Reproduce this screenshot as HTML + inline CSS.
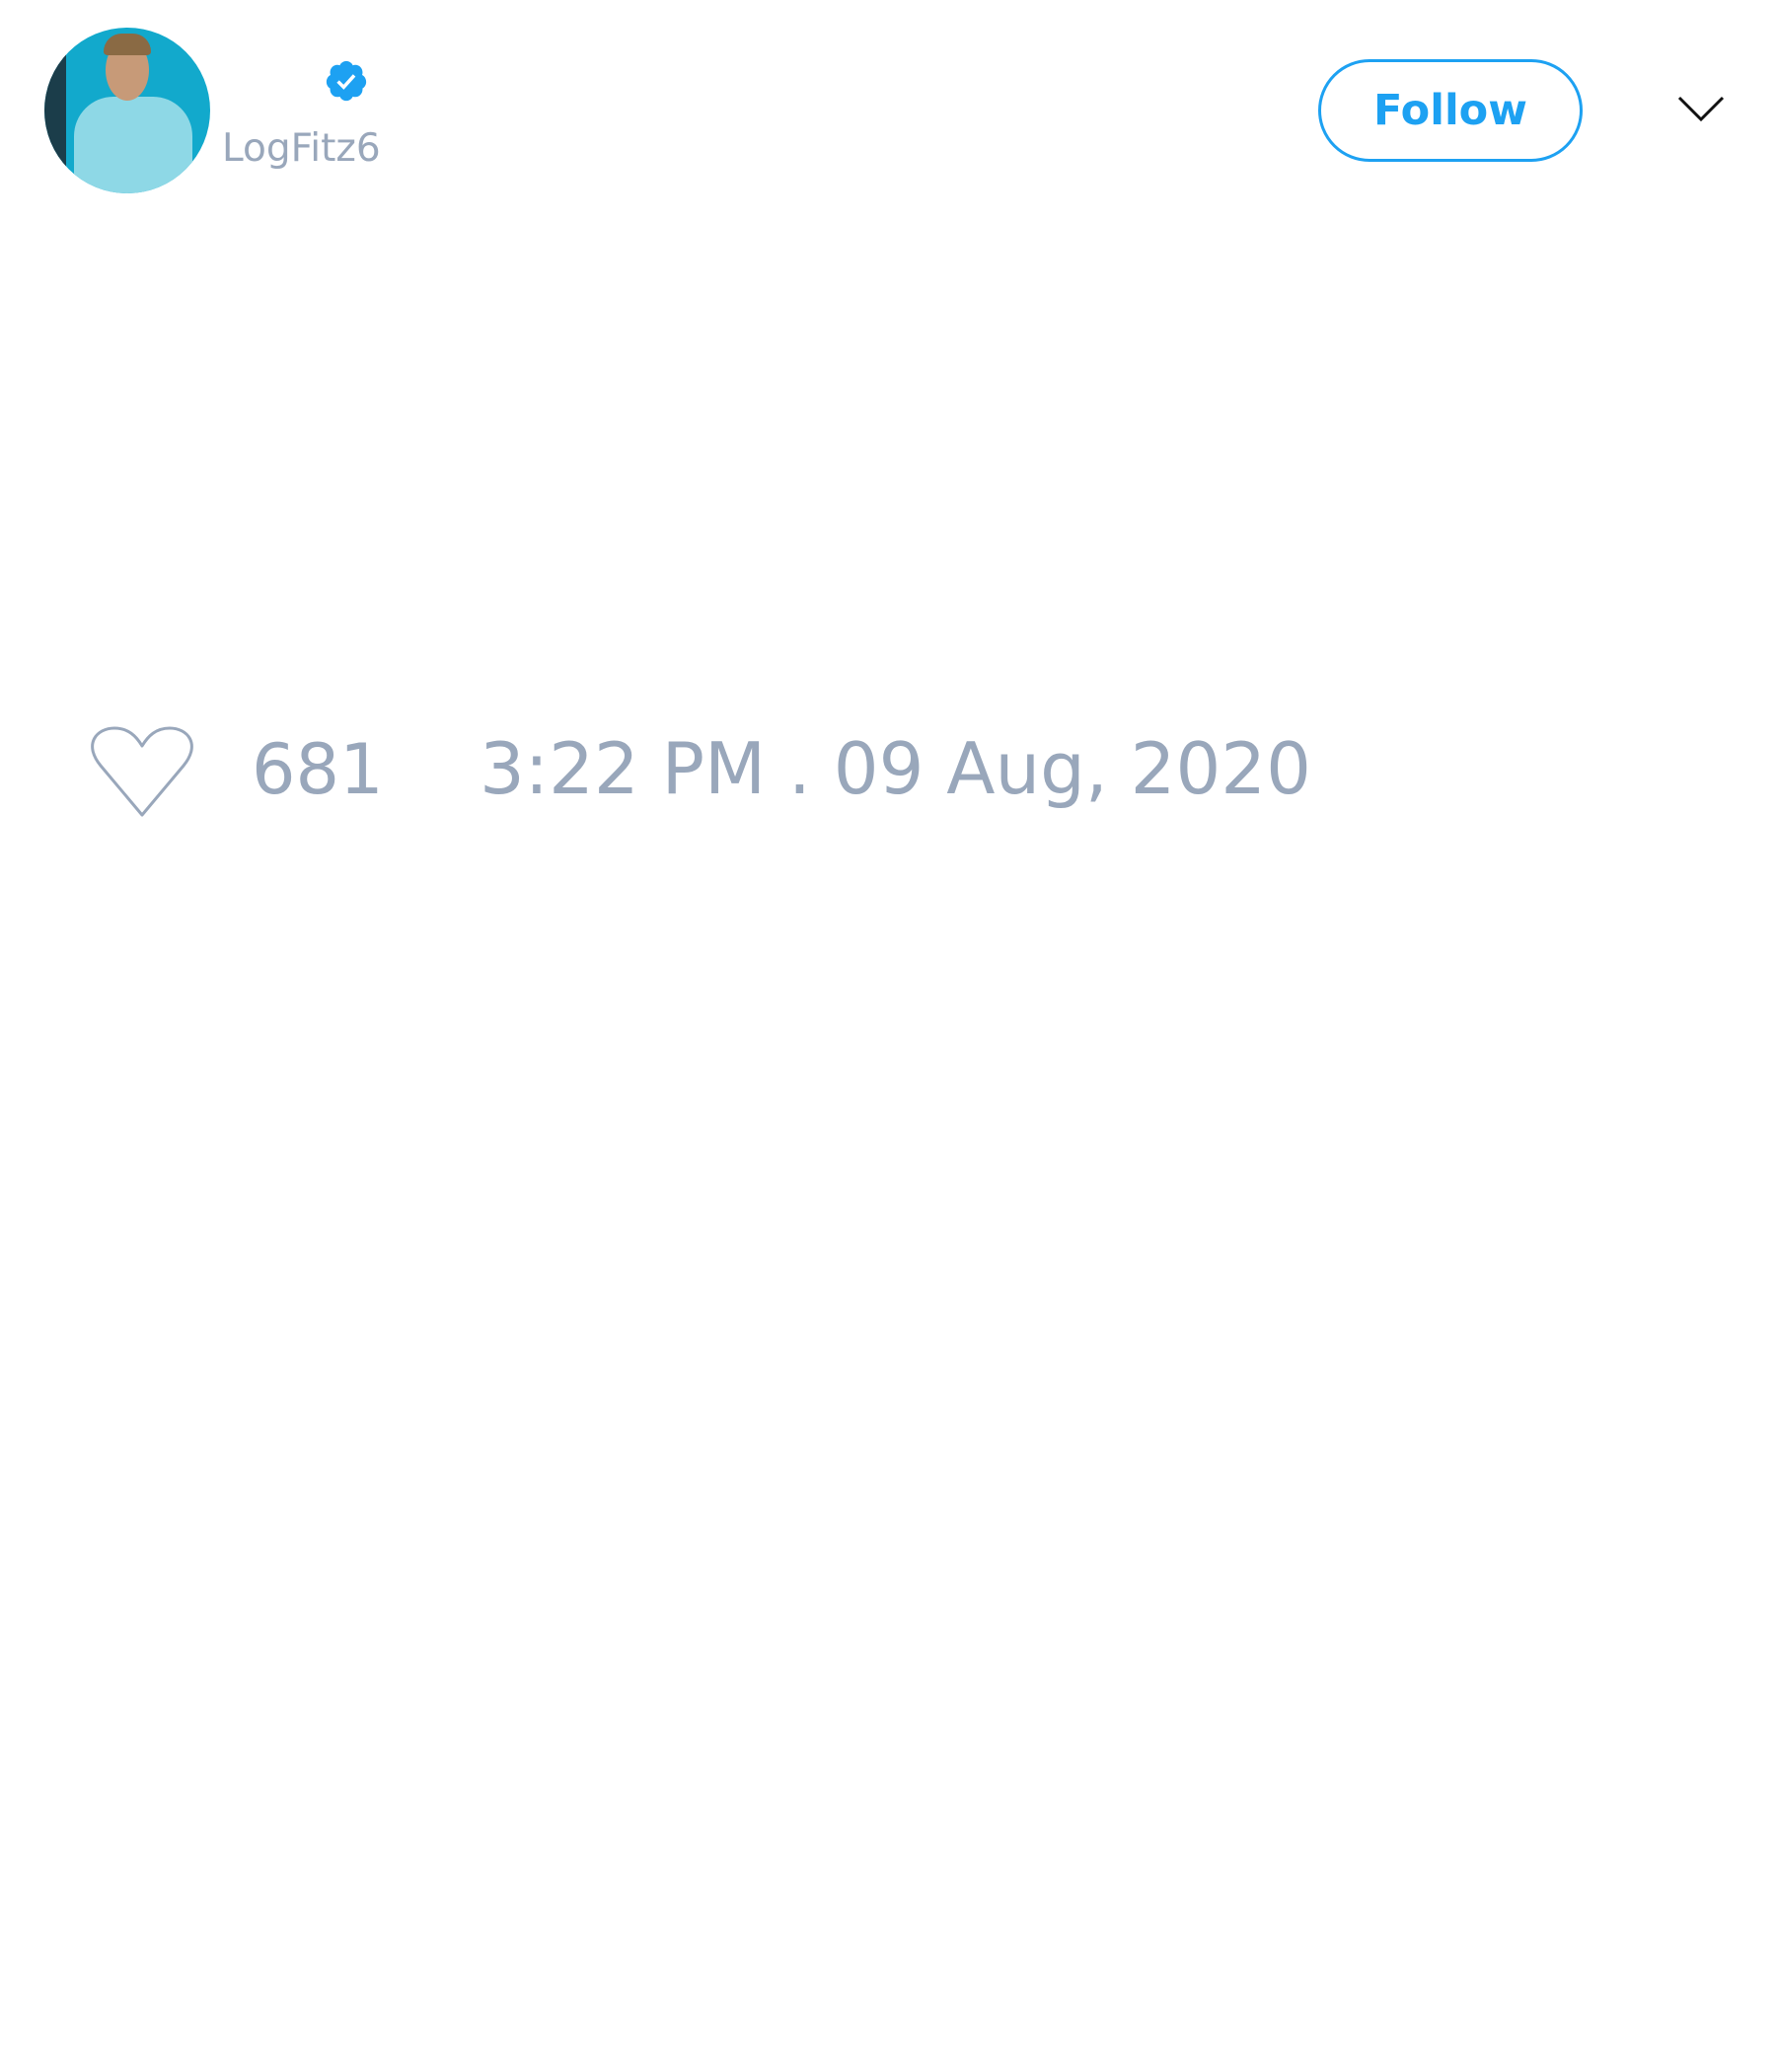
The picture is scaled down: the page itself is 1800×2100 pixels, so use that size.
<!DOCTYPE html>
<html><head><meta charset="utf-8"><style>
body{margin:0;width:1800px;height:2100px;background:#fff;position:relative;font-family:"DejaVu Sans","Liberation Sans",sans-serif;overflow:hidden}
.a{position:absolute}
</style></head><body>
<div class="a" style="left:45px;top:28px;width:168px;height:168px;border-radius:50%;overflow:hidden;background:#12a9cc">
 <div class="a" style="left:0;top:0;width:22px;height:168px;background:#1b3d4a"></div>
 <div class="a" style="left:30px;top:70px;width:120px;height:110px;border-radius:40px 40px 0 0;background:#8ed8e6"></div>
 <div class="a" style="left:62px;top:12px;width:44px;height:62px;border-radius:50%;background:#c79a78"></div>
 <div class="a" style="left:60px;top:6px;width:48px;height:22px;border-radius:20px 20px 4px 4px;background:#8a6a44"></div>
</div>
<svg class="a" style="left:328px;top:59px" width="46" height="46" viewBox="0 0 24 24"><path fill="#1da1f2" d="M22.5 12.5c0-1.58-.875-2.95-2.148-3.6.154-.435.238-.905.238-1.4 0-2.21-1.71-3.998-3.818-3.998-.47 0-.92.084-1.336.25C14.818 2.415 13.51 1.5 12 1.5s-2.816.917-3.437 2.250c-.415-.165-.866-.25-1.336-.25-2.110 0-3.818 1.79-3.818 4 0 .494.083.964.237 1.4-1.272.65-2.147 2.018-2.147 3.6 0 1.495.782 2.798 1.942 3.486-.02.17-.032.34-.032.514 0 2.21 1.708 4 3.818 4 .47 0 .92-.086 1.335-.25.62 1.334 1.926 2.25 3.437 2.25 1.512 0 2.818-.916 3.437-2.25.415.163.865.248 1.336.248 2.11 0 3.818-1.790 3.818-4 0-.174-.012-.344-.033-.513 1.158-.687 1.943-1.99 1.943-3.484z"/><path d="M7.6 12.3l3 3 5.6-6.2" stroke="#fff" stroke-width="1.8" fill="none"/></svg>
<div class="a" style="left:225px;top:128px;font-size:39px;color:#99a7bb">LogFitz6</div>
<div class="a" style="left:1336px;top:60px;width:262px;height:98px;border:3px solid #1da1f2;border-radius:52px;color:#1da1f2;font-weight:bold;font-size:43px;line-height:98px;text-align:center">Follow</div>
<svg class="a" style="left:1700px;top:96px" width="48" height="30" viewBox="0 0 48 30"><path d="M2 3L24 25L46 3" stroke="#111" stroke-width="3" fill="none"/></svg>
<svg class="a" style="left:90px;top:736px" width="108" height="94" viewBox="0 0 108 94"><path d="M54 90L12 40C-6 18 8 2 26 2C40 2 48 10 54 20C60 10 68 2 82 2C100 2 114 18 96 40Z" stroke="#99a7bb" stroke-width="3" fill="none" stroke-linejoin="round"/></svg>
<div class="a" style="left:255px;top:740px;font-size:70px;color:#99a7bb;line-height:80px">681</div>
<div class="a" style="left:486px;top:739px;font-size:72px;color:#99a7bb;line-height:80px;white-space:nowrap">3:22 PM . 09 Aug, 2020</div>
</body></html>
